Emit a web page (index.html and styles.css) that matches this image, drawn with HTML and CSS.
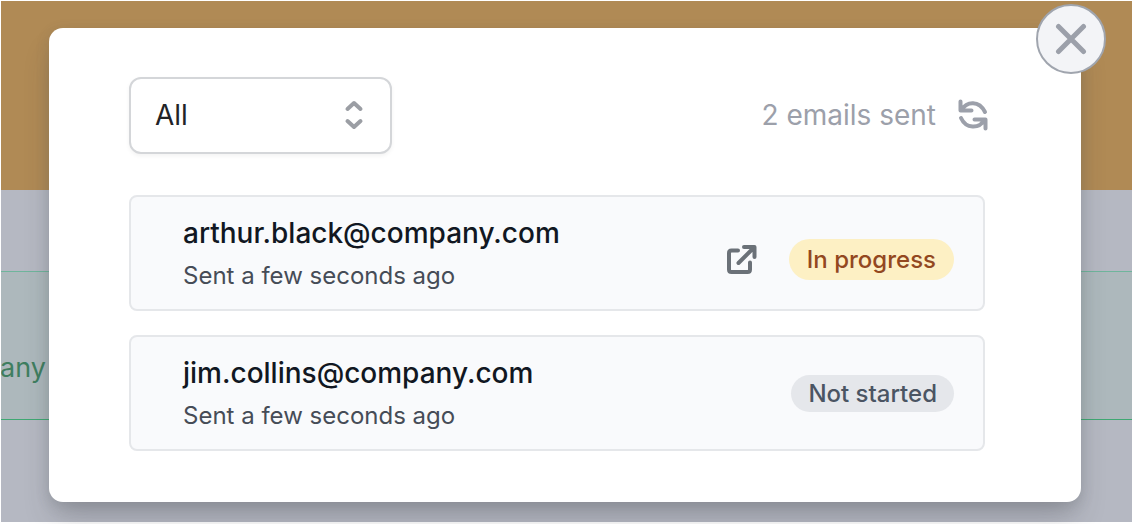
FILE: index.html
```html
<!DOCTYPE html>
<html lang="en">
<head>
<meta charset="utf-8">
<meta name="viewport" content="width=device-width, initial-scale=1">
<title>Emails sent</title>
<link rel="stylesheet" href="styles.css">
</head>
<body>
<div class="screen">
  <div class="backdrop" aria-hidden="true">
    <div class="band"></div>
    <div class="strip">any</div>
  </div>
  <main class="dialog" role="dialog" aria-label="Emails sent">
    <button class="close" type="button" aria-label="Close">
      <svg viewBox="0 0 32 32" width="32" height="32"><path d="M3.500 3.500 28.500 28.500M28.500 3.500 3.500 28.500"/></svg>
    </button>
    <header class="toolbar">
      <div class="picker">
        <select class="picker-select" aria-label="Filter by status">
          <option>All</option>
          <option>In progress</option>
          <option>Not started</option>
        </select>
        <svg class="picker-icon" viewBox="0 0 20 30" width="20" height="30"><path d="M3.500 9 10 3 16.500 9M3.500 21 10 27 16.500 21"/></svg>
      </div>
      <div class="summary">
        <span>2 emails sent</span>
        <button class="refresh" type="button" aria-label="Refresh">
          <svg viewBox="0 0 32 34" width="32" height="34"><path d="M3.500 3.500V12.500H14.500M4.500 12C10 3 22 2.500 28 14M28.500 30.500V21.500H17.500M27.500 22C22 31 9 31 4 20"/></svg>
        </button>
      </div>
    </header>
    <ul class="list">
      <li class="row">
        <div class="info">
          <span class="email">arthur.black@company.com</span>
          <span class="time">Sent a few seconds ago</span>
        </div>
        <div class="actions">
          <a class="open" href="#" aria-label="Open">
            <svg viewBox="0 0 32 32" width="32" height="32"><path d="M13 7.500H6.500Q4 7.500 4 10V26.500Q4 29 6.500 29H22.500Q25 29 25 26.500V19.500M19 4H29.500V14M29 4.500 13.500 20"/></svg>
          </a>
          <span class="badge badge-progress">In progress</span>
        </div>
      </li>
      <li class="row">
        <div class="info">
          <span class="email">jim.collins@company.com</span>
          <span class="time">Sent a few seconds ago</span>
        </div>
        <span class="badge badge-idle">Not started</span>
      </li>
    </ul>
  </main>
</div>
</body>
</html>
```
FILE: styles.css
```css
* { box-sizing: border-box; }
body {
  margin: 0;
  font-family: Inter, "Liberation Sans", sans-serif;
  background: #fff;
}
.screen {
  display: grid;
  min-height: 100vh;
  padding: 1px 0 2px 1px;
  overflow: hidden;
}
.backdrop, .dialog { grid-area: 1 / 1; }
.backdrop { background: #b5b8c2; overflow: hidden; }
.band { height: 189px; margin-bottom: 81px; background: #b08a55; }
.strip {
  height: 149px;
  padding-top: 79px;
  border-top: 1px solid #6fb59c;
  border-bottom: 1px solid #3fa873;
  background: #adb8bc;
  color: #3f7e60;
  font-size: 27px;
  line-height: 34px;
  text-indent: -1px;
}
.dialog {
  position: relative;
  align-self: start;
  margin: 27px 51px 20px 48px;
  padding: 49px 96px 51px 80px;
  border-radius: 14px;
  background: #fff;
  box-shadow: 0 20px 30px -6px rgba(50, 50, 60, 0.25), 0 4px 14px rgba(80, 90, 90, 0.2);
}
button { padding: 0; border: 0; background: none; cursor: pointer; }
svg {
  display: block;
  fill: none;
  stroke: currentColor;
  stroke-width: 4;
  stroke-linecap: round;
  stroke-linejoin: round;
}
.close {
  position: absolute;
  top: -24px;
  right: -25px;
  display: grid;
  place-items: center;
  width: 70px;
  height: 70px;
  border: 2px solid #a0a5ae;
  border-radius: 50%;
  background: #f3f4f7;
  color: #9ca0aa;
}
.close svg { stroke-width: 5; }
.toolbar { display: flex; align-items: center; justify-content: space-between; }
.picker { display: grid; align-items: center; width: 263px; }
.picker-select, .picker-icon { grid-area: 1 / 1; }
.picker-select {
  appearance: none;
  width: 100%;
  height: 77px;
  padding: 0 24px 2px;
  border: 2px solid #d4d6d9;
  border-radius: 12px;
  background: #fff;
  box-shadow: 0 2px 4px rgba(0, 0, 0, 0.05);
  color: #222327;
  font: 400 28px/36px Inter, "Liberation Sans", sans-serif;
}
.picker-icon { justify-self: end; margin: 0 28px 2px 0; color: #9b9ea4; pointer-events: none; }
.summary { display: flex; align-items: center; gap: 21px; margin: 0 -4px 2px 0; color: #9ca0aa; font-size: 28px; line-height: 36px; }
.refresh { color: #9ca0aa; }
.list { display: grid; gap: 24px; margin: 41px 0 0; padding: 0; list-style: none; }
.row {
  display: flex;
  align-items: center;
  min-height: 116px;
  padding: 0 29px 0 52px;
  border: 2px solid #e5e7ea;
  border-radius: 8px;
  background: #f9fafc;
}
.info { display: grid; flex: 1; gap: 6px; padding-top: 2px; }
.email { color: #111722; font-size: 28px; font-weight: 500; line-height: 38px; }
.time { color: #464c57; font-size: 24px; line-height: 36px; }
.actions { display: flex; align-items: center; gap: 32px; padding-top: 12px; }
.open { color: #6b7178; }
.badge { padding: 0 17px; border-radius: 21px; font-size: 24px; font-weight: 500; line-height: 37px; }
.badge-progress { padding: 2px 18px; background: #fdf0c4; color: #93481f; }
.badge-idle { background: #e5e7eb; color: #4b5563; }
```
